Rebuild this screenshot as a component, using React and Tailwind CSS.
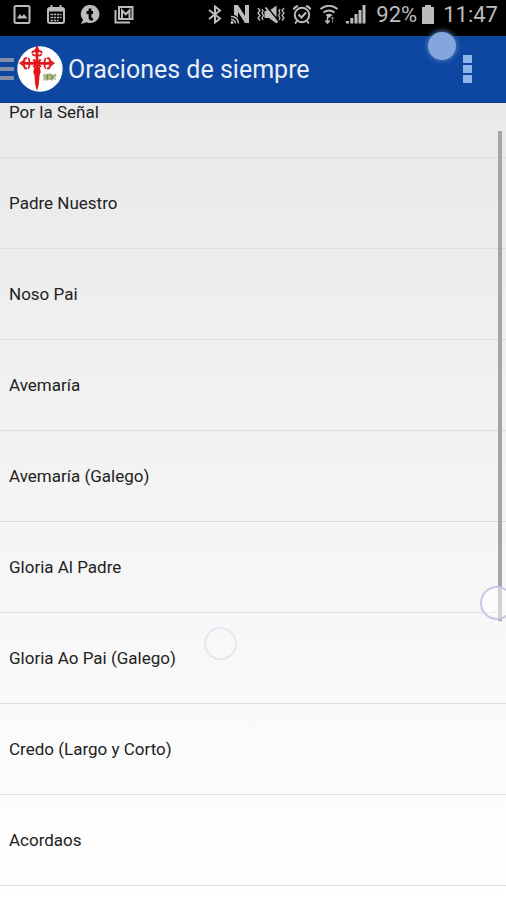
const ORACIONES = [
  'Por la Señal',
  'Padre Nuestro',
  'Noso Pai',
  'Avemaría',
  'Avemaría (Galego)',
  'Gloria Al Padre',
  'Gloria Ao Pai (Galego)',
  'Credo (Largo y Corto)',
  'Acordaos',
]

function IconosAvisos() {
  return (
    <div className="flex items-center gap-3.5">
      <svg className="h-5 w-5" viewBox="0 0 20 20" fill="none" stroke="currentColor" strokeWidth="2">
        <rect x="2.5" y="1" width="15" height="17" rx="1.5" />
        <path d="M5 13.5 8 9l2 2.5L12 9l3.500 4.500z" fill="currentColor" stroke="none" />
      </svg>
      <svg className="h-5 w-5" viewBox="0 0 20 20" fill="none" stroke="currentColor">
        <path d="M5.5 0v3M14.5 0v3" strokeWidth="2" />
        <rect x="2" y="3" width="16" height="15" rx="2" strokeWidth="2" />
        <path d="M2 5h16" strokeWidth="3" />
        <path d="M4.5 9.500h11M4.500 12.500h11M4.500 15.500h8" strokeWidth="1.700" strokeDasharray="2.400 .8" />
      </svg>
      <svg className="h-5 w-5" viewBox="0 0 20 20">
        <path d="M10.500 0a9 9 0 1 1-3.800 17.200L1 19l2-4.200A9 9 0 0 1 10.500 0z" fill="currentColor" />
        <path d="M10 3.500v9.200q0 2 3 1.300M6.500 7.500H13" fill="none" stroke="#000" strokeWidth="2.800" />
      </svg>
      <svg className="h-5 w-5" viewBox="0 0 20 20" fill="none" stroke="currentColor">
        <path d="M1.500 5v12.500H16" strokeWidth="2" />
        <rect x="5" y="2" width="13.500" height="12" strokeWidth="2" />
        <path d="M8 13V5.500l3.800 3.800L15.500 5.500V13" strokeWidth="2" />
      </svg>
    </div>
  )
}

function IconosSistema() {
  return (
    <div className="flex items-center gap-[7px]">
      <svg className="h-5 w-4" viewBox="0 0 16 20" fill="none" stroke="currentColor" strokeWidth="2">
        <path d="m2 5 11 8.500L8 17.500v-16L13 5.500 2 14" />
      </svg>
      <svg className="h-5 w-5" viewBox="0 0 20 20" fill="none" stroke="currentColor">
        <path d="M4 0h4l7 11V0h4v18h-4L8 7v6q-1.500-3-4-3z" fill="currentColor" stroke="none" />
        <path d="M1 11.500a7 7 0 0 1 7.500 7M1 14.500a4 4 0 0 1 4.500 4" strokeWidth="1.500" />
        <circle cx="2" cy="17.500" r="1.500" fill="currentColor" stroke="none" />
      </svg>
      <svg className="h-5 w-7" viewBox="0 0 28 20" fill="none" stroke="currentColor">
        <path d="m1 3 2 2.500L1 8l2 2.500L1 13l2 2.500M5 4l1 2-1 2 1.500 2.500L5 13l1 2" strokeWidth="1.300" />
        <path d="m27 3-2 2.500L27 8l-2 2.500 2 2.500-2 2.500M23 4l-1 2 1 2-1.500 2.500L23 13l-1 2" strokeWidth="1.300" />
        <path d="M7.500 6H12l7.500-5.500v18L12 13H7.500z" fill="currentColor" stroke="none" />
        <path d="m10.500 2.500 11 13.500" stroke="#000" strokeWidth="1.500" />
        <path d="m8.500 2.500 12 15" strokeWidth="2" />
      </svg>
      <svg className="h-5 w-5" viewBox="0 0 20 20" fill="none" stroke="currentColor" strokeWidth="2">
        <circle cx="10" cy="10" r="7.200" />
        <path d="m6.500 9.500 3 3L14 7.500M5 16l-2 2.500M15 16l2 2.500M1.500 4.500A6 6 0 0 1 6 1M18.500 4.500A6 6 0 0 0 14 1" />
      </svg>
      <svg className="h-5 w-5" viewBox="0 0 20 20" fill="none" stroke="currentColor" strokeWidth="2">
        <path d="M1.500 4q8.500-6.500 17 0M4.500 7.500q5.500-4 11 0" />
        <path d="M6.500 10q3.500-2.500 7 0L10 13z" fill="currentColor" stroke="none" />
        <path d="M8.500 11.500V18M6.300 15.500l2.200 2.500 2.200-2.500" strokeWidth="1.500" />
        <path d="M13.500 18v-6M11.800 14l1.700-2 1.700 2" strokeWidth="1" opacity=".6" />
      </svg>
      <svg className="h-5 w-5" viewBox="0 0 20 20" fill="currentColor">
        <path d="M0 16h3v2.500H0zM4.300 13h3v5.500h-3zM8.500 9h3v9.500h-3zM12.500 5h3v13.500h-3zM16.500 0h3v18.500h-3z" />
      </svg>
    </div>
  )
}

function Escudo() {
  return (
    <svg className="h-[46px] w-[46px]" viewBox="0 0 138 138">
      <circle cx="69" cy="69" r="68" fill="#fff" />
      <g fill="none" stroke="#e3151c">
        <path d="M60 10v72M18 52h84" strokeWidth="8" />
        <path
          d="M46 22q0-8 8-6l6-12 6 12q8-2 8 6M30 37q-9-2-8 7l-11 8 11 8q-1 9 8 7M90 37q9-2 8 7l11 8-11 8q1 9-8 7"
          strokeWidth="6"
        />
        <path d="M46 24q6 8 14 2 8 6 14-2M33 36q8 8 1 16 7 8-1 16M87 36q-8 8-1 16-7 8 1 16" strokeWidth="5" />
        <path d="m49 41 22 22M71 41 49 63" strokeWidth="7" />
      </g>
      <path d="M52 62h16l2 10q4 8-2 14l-3 32-5 17-5-17-3-32q-6-6-2-14z" fill="#e3151c" />
      <path d="M78 86q5-7 12-1l9-5 9 6 8-4 3 8-4 3 3 9-8-2-5 5-7-6-9 7-4-5-8 4 2-10z" fill="#bcc7a8" />
      <path
        d="m80 88 8 5 10-6 7 7 10-7M86 101l6-7 8 7 8-5M91 84v17M104 86v13"
        fill="none"
        stroke="#6b8d47"
        strokeWidth="3"
      />
      <path d="M95 92h8v5h-8z" fill="#e0bd58" />
    </svg>
  )
}

function BarraEstado() {
  return (
    <div className="flex h-9 shrink-0 items-center justify-between bg-black pb-1.5 pl-3 pr-2 text-[#bcbcbc]">
      <IconosAvisos />
      <div className="flex items-center">
        <IconosSistema />
        <span className="ml-2.5 text-[22px] leading-6">92%</span>
        <svg className="ml-1 h-5 w-3.5" viewBox="0 0 14 20" fill="currentColor">
          <path d="M4 0h6v2h3v17H1V2h3z" />
        </svg>
        <span className="ml-2 text-[22px] leading-6">11:47</span>
      </div>
    </div>
  )
}

function Cabecera() {
  return (
    <header className="relative flex h-[67px] shrink-0 items-center border-b border-[#0b3886] bg-[#0e47a1]">
      <button aria-label="Abrir menú" className="mr-[3px] flex w-3.5 flex-col gap-[5px]">
        <span className="h-1 bg-[#8190a8]" />
        <span className="h-1 bg-[#8190a8]" />
        <span className="h-1 bg-[#8190a8]" />
      </button>
      <Escudo />
      <h1 className="ml-[5px] flex-1 pt-0.5 text-[25px] leading-8 text-[#e8eef8]">Oraciones de siempre</h1>
      <button aria-label="Más opciones" className="mr-[34px] flex w-[9px] flex-col gap-0.5">
        <span className="h-2 bg-[#8fb4e8]" />
        <span className="h-2 bg-[#8fb4e8]" />
        <span className="h-2 bg-[#8fb4e8]" />
      </button>
      <span className="absolute -top-1 right-[50px] h-7 w-7 rounded-full bg-[#83a6dc] shadow-[0_0_5px_1px_#4f79bf]" />
    </header>
  )
}

export default function App() {
  return (
    <div className="flex h-screen flex-col overflow-hidden font-['Roboto',sans-serif]">
      <BarraEstado />
      <Cabecera />
      <main className="relative flex-1 overflow-hidden bg-linear-to-b from-[#e9e9e9] to-white">
        {/* lista ya desplazada unos píxeles */}
        <ul className="-mt-9">
          {ORACIONES.map((oracion) => (
            <li key={oracion} className="border-b border-[#dedede]">
              <a href="#" className="flex h-[90px] items-center px-[9px] text-[17px] leading-6 text-[#222]">
                {oracion}
              </a>
            </li>
          ))}
        </ul>
        <span className="absolute right-1 top-7 h-[490px] w-1 bg-[#a5a5a5]" />
        <span className="absolute -right-2 top-[483px] h-[34px] w-[34px] rounded-full border-2 border-[#c9c8e6] bg-white/50" />
        <span className="absolute left-[204px] top-[524px] h-[33px] w-[33px] rounded-full border-2 border-[#e6e6f3]" />
      </main>
    </div>
  )
}
